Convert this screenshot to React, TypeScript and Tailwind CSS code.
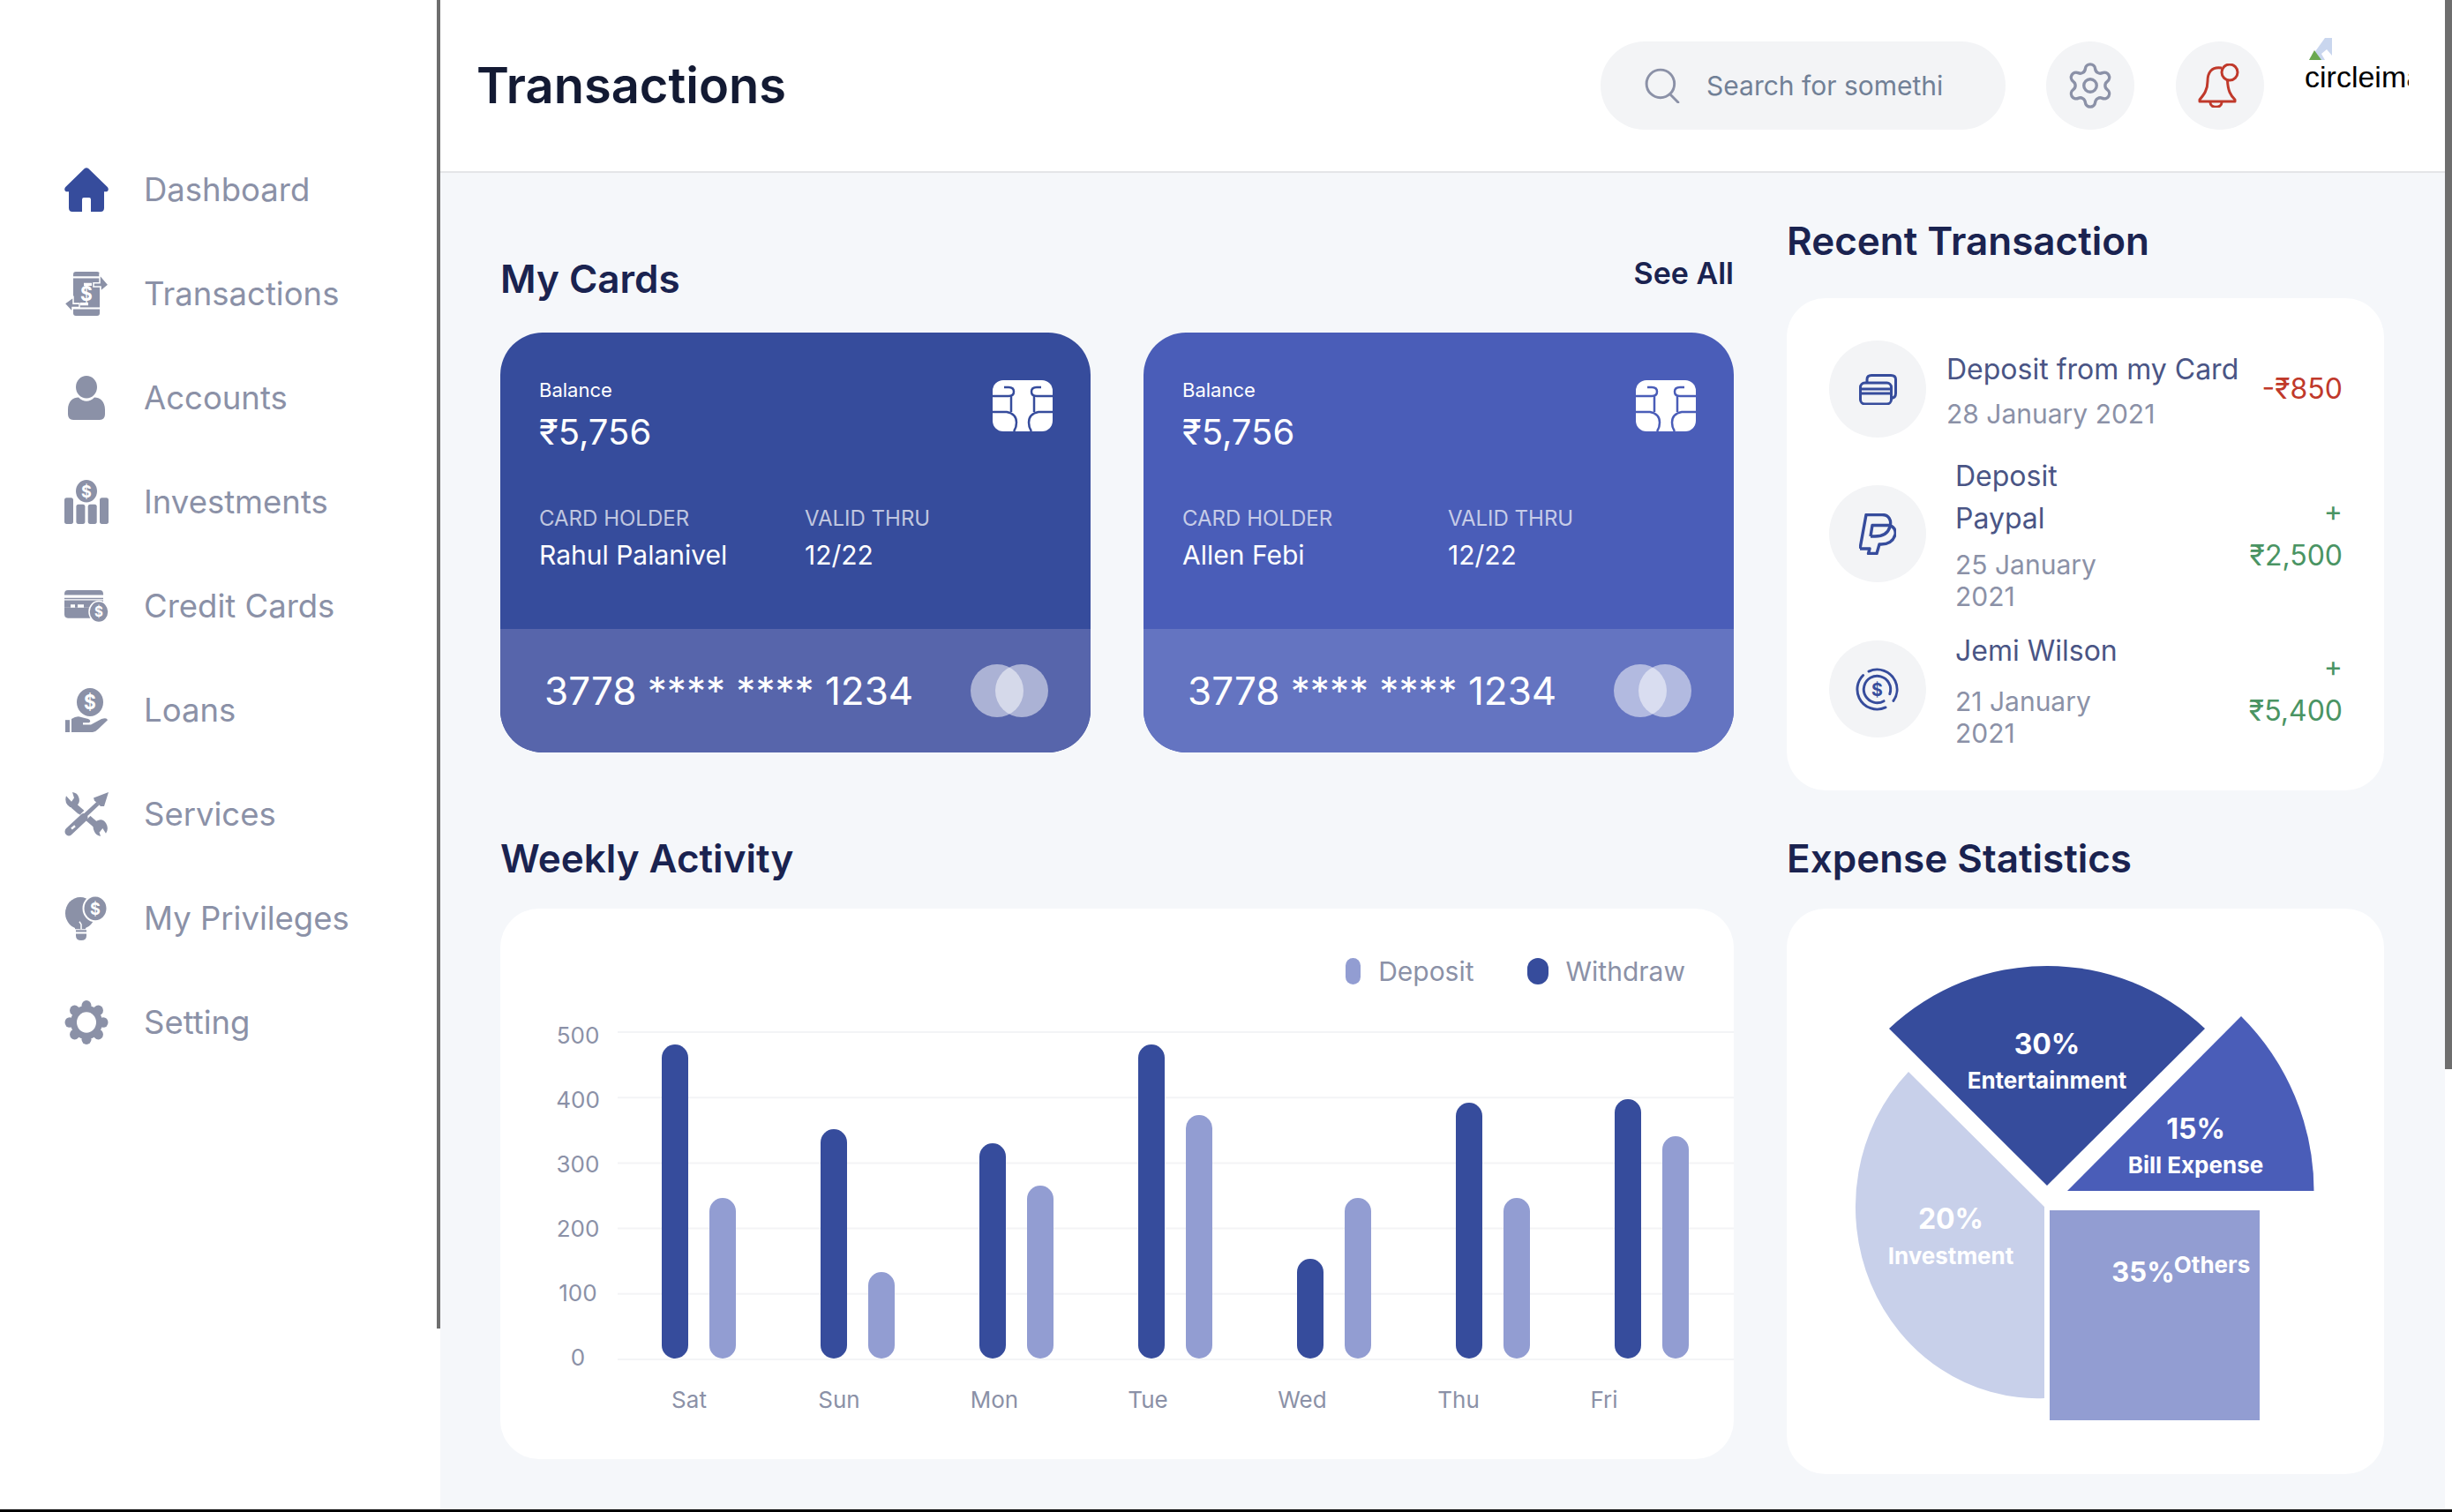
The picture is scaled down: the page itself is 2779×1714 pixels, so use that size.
import { Settings } from "lucide-react";
import type { ReactNode } from "react";

const dollar = (x: number, y: number, size: number) => (
  <text x={x} y={y} fontSize={size} fontWeight={700} fill="#fff" textAnchor="middle" dominantBaseline="central" fontFamily="Inter, sans-serif">
    $
  </text>
);

function NavSvg({ h = 50, vb = "0 0 50 47", children }: { h?: number; vb?: string; children: ReactNode }) {
  return (
    <svg viewBox={vb} preserveAspectRatio="none" width={50} style={{ height: h }} fill="currentColor">
      {children}
    </svg>
  );
}

const navIcons: Record<string, ReactNode> = {
  Dashboard: (
    <NavSvg>
      <path d="M22.8 1Q25-.5 27.2 1L49 21Q51 24 48 25.5H45V43Q45 47 41 47H30V34Q30 32 28 32H22Q20 32 20 34V47H9Q5 47 5 43V25.5H2Q-1 24 1 21Z" />
    </NavSvg>
  ),
  Transactions: (
    <NavSvg>
      <path d="M10 5V3Q10 0 13 0H37Q40 0 40 3V5Z" />
      <rect x="10" y="7" width="30" height="31" />
      <path d="M10 40H40V44Q40 47 37 47H13Q10 47 10 44Z" />
      {dollar(25, 23, 21)}
      <path d="M40 3L50 14 41 21V16H33V12H40Z" stroke="#fff" strokeWidth="1.5" />
      <path d="M10 27L0 34 9 43V38H17V34H10Z" stroke="#fff" strokeWidth="1.5" />
      <path d="M22 12H31V15H22ZM18 33H27V36H18Z" fill="#fff" />
    </NavSvg>
  ),
  Accounts: (
    <NavSvg>
      <circle cx="25" cy="12" r="12" />
      <path d="M4 36C4 27 10 23 16 23 19 26 22 27 25 27 28 27 31 26 34 23 40 23 46 27 46 36V41Q46 47 40 47H10Q4 47 4 41Z" />
    </NavSvg>
  ),
  Investments: (
    <NavSvg>
      <circle cx="25" cy="12" r="12" />
      {dollar(25, 12, 18)}
      <rect x="0" y="19" width="10" height="28" rx="2.5" />
      <rect x="13.4" y="26" width="10" height="21" rx="2.5" />
      <rect x="26.7" y="26" width="10" height="21" rx="2.5" />
      <rect x="40" y="19" width="10" height="28" rx="2.5" />
    </NavSvg>
  ),
  "Credit Cards": (
    <NavSvg h={36} vb="0 0 50 33">
      <path d="M0 5V4Q0 0 4 0H40Q44 0 44 4V5Z" />
      <path d="M0 8H44V18H0Z" />
      <path d="M0 18H44V29H4Q0 29 0 25Z" />
      <path d="M7 15H12V18H7ZM15 15H22V18H15Z" fill="#fff" />
      <path d="M0 10H44" stroke="#fff" strokeWidth="1" />
      <circle cx="39" cy="22.5" r="11" stroke="#fff" strokeWidth="1.5" />
      {dollar(39, 22.5, 15)}
    </NavSvg>
  ),
  Loans: (
    <NavSvg>
      <circle cx="29" cy="15" r="15" />
      {dollar(29, 14.5, 21)}
      <rect x="1" y="34" width="5" height="13" />
      <path d="M8 33Q14 29 19 31L27 33Q31 35 28 37H21V39H30L42 33Q48 31 49 34L38 44Q35 47 32 47H8Z" />
    </NavSvg>
  ),
  Services: (
    <NavSvg>
      <path d="M10 14L42 40" stroke="currentColor" strokeWidth="7" fill="none" />
      <path d="M2 4A8 9 0 0 0 12 16 8 8 0 0 0 16 5Q15 1 9 0L11 6 8 10Z" />
      <path d="M47 44A8 9 0 0 0 38 30 8 8 0 0 0 34 42Q36 46 41 47L39 41 43 38Z" />
      <path d="M21 27L38 11" stroke="#fff" strokeWidth="9" fill="none" />
      <path d="M22 26L38 12" stroke="currentColor" strokeWidth="4.5" fill="none" />
      <path d="M33 6L50 0 45 15 41 15 34 9Z" />
      <path d="M5 42L21 28" stroke="#fff" strokeWidth="13" fill="none" />
      <path d="M5 42L22 27" stroke="currentColor" strokeWidth="9" strokeLinecap="round" fill="none" />
      <path d="M8 39L12 36" stroke="#fff" strokeWidth="2.5" fill="none" />
    </NavSvg>
  ),
  "My Privileges": (
    <NavSvg>
      <circle cx="18" cy="18" r="17" />
      <path d="M12 33H24V35H12Z" />
      <circle cx="35" cy="13" r="14.5" fill="#fff" />
      <circle cx="35" cy="13" r="12.5" />
      {dollar(35, 13, 18)}
      <path d="M13 36H25V38H13Z" />
      <path d="M13 40H25V42Q25 47 19 47 13 47 13 42Z" />
      <path d="M17 27L19 30V35" stroke="#fff" strokeWidth="1.5" fill="none" />
    </NavSvg>
  ),
  Setting: (
    <NavSvg>
      <circle cx="25" cy="23.5" r="18" />
      {[0, 45, 90, 135, 180, 225, 270, 315].map((a) => (
        <circle key={a} cx={25 + 19 * Math.sin((a * Math.PI) / 180)} cy={23.5 - 18 * Math.cos((a * Math.PI) / 180)} r="5.5" />
      ))}
      <circle cx="25" cy="23.5" r="11" fill="#fff" />
    </NavSvg>
  ),
};

const navItems = ["Dashboard", "Transactions", "Accounts", "Investments", "Credit Cards", "Loans", "Services", "My Privileges", "Setting"];

function Sidebar() {
  return (
    <aside className="flex h-full w-[499px] shrink-0 bg-white">
      <nav className="flex-1 pl-[73px] pt-[156px]">
        {navItems.map((item, i) => (
          <div key={item} className={`flex h-[118px] items-center text-[36.5px] ${i === 0 ? "text-[#364c9c]" : "text-[#8b91a7]"}`}>
            <div className="flex w-[90px] shrink-0">{navIcons[item]}</div>
            <span className="text-[#8b91a7]">{item}</span>
          </div>
        ))}
      </nav>
      <div className="w-1 shrink-0">
        <div className="h-[1506px] w-1 bg-[#6e6e6e]" />
      </div>
    </aside>
  );
}

function BellIcon() {
  return (
    <svg viewBox="0 0 50 50" className="h-[50px] w-[50px]" fill="none" stroke="#c0392b" strokeWidth="3">
      <circle cx="36" cy="10" r="9" />
      <path d="M27 5C15 3 11 11 11 20 11 30 7 35 2 41V43H42V41C37 36 34 31 33.5 19" strokeLinejoin="round" />
      <path d="M14 44C14 51 27 51 27 44" />
    </svg>
  );
}

function Header() {
  return (
    <header className="flex h-[196px] shrink-0 items-center border-b-2 border-[#e4e5e8] bg-white pl-[41px] pr-[41px]">
      <h1 className="text-[56px] font-semibold text-[#131a33]">Transactions</h1>
      <div className="ml-auto flex h-[100px] w-[459px] items-center rounded-full bg-[#f3f4f6] pl-[50px]">
        <svg viewBox="0 0 38 38" className="h-[40px] w-[40px] shrink-0" fill="none" stroke="#8b91a7" strokeWidth="2.8" strokeLinecap="round">
          <circle cx="17" cy="17" r="15" />
          <path d="M28 29L36 37" />
        </svg>
        <span className="ml-[30px] w-[268px] overflow-hidden whitespace-nowrap text-[30px] text-[#718096]">Search for something</span>
      </div>
      <div className="ml-[46px] flex h-[100px] w-[100px] items-center justify-center rounded-full bg-[#f3f4f6]">
        <Settings size={58} strokeWidth={1.4} color="#8b91a7" />
      </div>
      <div className="ml-[47px] flex h-[100px] w-[100px] items-center justify-center rounded-full bg-[#f3f4f6]">
        <BellIcon />
      </div>
      <div className="ml-[46px] flex h-[100px] w-[118px] flex-col self-start overflow-hidden pt-[43px] font-['Liberation_Sans',sans-serif] text-[34px] leading-[38px] text-black">
        <svg viewBox="0 0 26 25" className="ml-[5px] h-[25px] w-[26px] shrink-0">
          <path d="M0 25L18 0H26V25Z" fill="#c9d6ee" />
          <path d="M0 25L6 14 14 25Z" fill="#6aa84f" />
          <path d="M14 18L18 25H26V20L20 13Z" fill="#fff" />
        </svg>
        <span className="whitespace-nowrap">circleimage</span>
      </div>
    </header>
  );
}

function Chip({ stroke }: { stroke: string }) {
  const half = (
    <g fill="none" stroke={stroke} strokeWidth="2.5">
      <path d="M0 18H18Q24 18 24 13 24 8 18 8H13" />
      <path d="M0 36H16Q27 38 27 48 27 54 24 58" />
      <path d="M21 18V36" />
    </g>
  );
  return (
    <svg viewBox="0 0 68 58" className="mt-[2px] h-[58px] w-[68px]">
      <rect width="68" height="58" rx="12" fill="#fff" />
      {half}
      <g transform="translate(68 0) scale(-1 1)">{half}</g>
    </svg>
  );
}

function BankCard({ holder, top, bottom }: { holder: string; top: string; bottom: string }) {
  return (
    <div className="flex h-[476px] w-[669px] flex-col overflow-hidden rounded-[48px] text-white" style={{ backgroundColor: top }}>
      <div className="h-[336px] pl-[44px] pr-[43px] pt-[52px]">
        <div className="flex justify-between">
          <div>
            <div className="text-[22px] leading-[26px]">Balance</div>
            <div className="mt-[12px] text-[40px] leading-[46px]">₹5,756</div>
          </div>
          <Chip stroke={top} />
        </div>
        <div className="mt-[60px] grid grid-cols-[301px_1fr]">
          <div>
            <div className="text-[24px] leading-[30px] text-white/70">CARD HOLDER</div>
            <div className="mt-[8px] text-[30px] leading-[36px]">{holder}</div>
          </div>
          <div>
            <div className="text-[24px] leading-[30px] text-white/70">VALID THRU</div>
            <div className="mt-[8px] text-[30px] leading-[36px]">12/22</div>
          </div>
        </div>
      </div>
      <div className="flex flex-1 items-center justify-between pl-[50px] pr-[48px]" style={{ backgroundColor: bottom }}>
        <span className="text-[44px]">3778 **** **** 1234</span>
        <div className="flex">
          <div className="h-[60px] w-[60px] rounded-full bg-white/50" />
          <div className="-ml-[32px] h-[60px] w-[60px] rounded-full bg-white/50" />
        </div>
      </div>
    </div>
  );
}

const txIcons = {
  cards: (
    <svg viewBox="0 0 43 35" className="h-[35px] w-[43px]" fill="none" stroke="#364c9c" strokeWidth="3">
      <rect x="1.5" y="10" width="35" height="24" rx="5" />
      <path d="M1.5 17H36.5M1.5 22H36.5" />
      <path d="M9 10V6Q9 1.5 14 1.5H36Q41.5 1.5 41.5 6V22Q41.5 27 36.5 27.5" />
    </svg>
  ),
  paypal: (
    <svg viewBox="0 0 42 47" className="h-[47px] w-[42px]" fill="none" stroke="#364c9c" strokeWidth="3.4" strokeLinejoin="round">
      <path d="M1 40L8 1.5H26C34 1.5 37 8 35 15 33 22 27 26 18 26H13" />
      <path d="M13 26L15 13.5H33C39 14 42 19 41 24 39 31 33 35 25 35H23L20 45.5H10.5L12 40H1" />
    </svg>
  ),
  coin: (
    <svg viewBox="0 0 50 50" className="-ml-[2px] h-[49px] w-[49px]" fill="none" stroke="#364c9c" strokeWidth="3" strokeLinecap="round">
      <circle cx="25" cy="25" r="23" pathLength="360" strokeDasharray="150 210" transform="rotate(-115 25 25)" />
      <circle cx="25" cy="25" r="23" pathLength="360" strokeDasharray="160 200" transform="rotate(65 25 25)" />
      <circle cx="25" cy="25" r="15.5" pathLength="360" strokeDasharray="320 40" transform="rotate(60 25 25)" />
      <text x="25" y="25.5" fontSize="20" fontWeight="700" fill="#364c9c" stroke="none" textAnchor="middle" dominantBaseline="central" fontFamily="Inter, sans-serif">
        $
      </text>
    </svg>
  ),
};

function TxRow({ icon, title, date, amount, color, className, textClass, dateClass }: { icon: ReactNode; title: ReactNode; date: ReactNode; amount: ReactNode; color: string; className: string; textClass: string; dateClass: string }) {
  return (
    <div className={`flex items-center ${className}`}>
      <div className="flex h-[110px] w-[110px] shrink-0 items-center justify-center rounded-full bg-[#f3f4f6]">{icon}</div>
      <div className={textClass}>
        <div className="text-[32px] leading-[48px] text-[#4a5585]">{title}</div>
        <div className={`text-[30px] leading-[36px] text-[#8b91a7] ${dateClass}`}>{date}</div>
      </div>
      <div className="ml-auto text-right text-[32px] leading-[50px]" style={{ color }}>
        {amount}
      </div>
    </div>
  );
}

function RecentTransactions() {
  return (
    <div className="h-[558px] rounded-[44px] bg-white pl-[48px] pr-[47px]">
      <TxRow className="h-[158px] pt-[48px]" textClass="ml-[23px]" dateClass="mt-[8px]" icon={txIcons.cards} title="Deposit from my Card" date="28 January 2021" amount="-₹850" color="#c0392b" />
      <TxRow
        className="h-[218px]"
        textClass="ml-[33px]"
        dateClass="mt-[10px]"
        icon={txIcons.paypal}
        title={<>Deposit<br />Paypal</>}
        date={<>25 January<br />2021</>}
        amount={<>+<br />₹2,500</>}
        color="#4a9463"
      />
      <TxRow
        className="h-[134px]"
        textClass="ml-[33px]"
        dateClass="mt-[15px]"
        icon={txIcons.coin}
        title="Jemi Wilson"
        date={<>21 January<br />2021</>}
        amount={<>+<br />₹5,400</>}
        color="#4a9463"
      />
    </div>
  );
}

const DARK = "#364c9c";
const LIGHT = "#929dd2";
const weekly = [
  { label: "Sat", labelX: 214, x: 183, dark: 1184, light: 1358 },
  { label: "Sun", labelX: 384, x: 363, dark: 1280, light: 1442 },
  { label: "Mon", labelX: 560, x: 543, dark: 1296, light: 1344 },
  { label: "Tue", labelX: 734, x: 723, dark: 1184, light: 1264 },
  { label: "Wed", labelX: 909, x: 903, dark: 1427, light: 1358 },
  { label: "Thu", labelX: 1086, x: 1083, dark: 1250, light: 1358 },
  { label: "Fri", labelX: 1251, x: 1263, dark: 1246, light: 1288 },
];
const BASE = 1540;

function WeeklyChart() {
  return (
    <svg viewBox="0 0 1398 494" className="h-[494px] w-[1398px]" fontFamily="Inter, sans-serif" fontSize="26" fill="#8b91a7">
      {[500, 400, 300, 200, 100, 0].map((v, i) => (
        <g key={v}>
          <line x1="133" x2="1398" y1={10 + i * 74.2} y2={10 + i * 74.2} stroke="#f3f4f6" strokeWidth="2" />
          <text x="88" y={13 + i * 73} textAnchor="middle" dominantBaseline="central">
            {v}
          </text>
        </g>
      ))}
      {weekly.map((d) => (
        <g key={d.label}>
          <rect x={d.x} y={d.dark - 1160} width="30" height={BASE - d.dark} rx="15" fill={DARK} />
          <rect x={d.x + 54} y={d.light - 1160} width="30" height={BASE - d.light} rx="15" fill={LIGHT} />
          <text x={d.labelX} y="426" textAnchor="middle" dominantBaseline="central">
            {d.label}
          </text>
        </g>
      ))}
    </svg>
  );
}

function ExpensePie() {
  const label = (x: number, y: number, size: number, weight: number, text: string) => (
    <text x={x} y={y} fontSize={size} fontWeight={weight} fill="#fff" textAnchor="middle" dominantBaseline="central">
      {text}
    </text>
  );
  return (
    <svg viewBox="0 0 677 641" className="h-[641px] w-[677px]" fontFamily="Inter, sans-serif">
      <path d="M116 136A261 261 0 0 1 474 136L295 314Z" fill={DARK} />
      <path d="M515 122A280 280 0 0 1 597.5 320H318Z" fill="#4a5db8" />
      <path d="M138 185A206 217 0 0 0 292 555V338Z" fill="#c8d0ea" />
      <rect x="298" y="342" width="238" height="238" fill={LIGHT} />
      {label(295, 153, 32, 700, "30%")}
      {label(295, 194, 26, 700, "Entertainment")}
      {label(463.5, 249, 32, 700, "15%")}
      {label(463.5, 290, 26, 700, "Bill Expense")}
      {label(186, 351, 32, 700, "20%")}
      {label(186, 393, 26, 700, "Investment")}
      {label(404, 411, 31, 700, "35%")}
      {label(482, 403, 26, 700, "Others")}
    </svg>
  );
}

function SectionTitle({ children }: { children: ReactNode }) {
  return <h2 className="flex h-[60px] items-center text-[44px] font-semibold text-[#1a2350]">{children}</h2>;
}

export default function App() {
  return (
    <div className="flex h-[1714px] w-[2779px] flex-col overflow-hidden bg-white font-['Inter',sans-serif]">
      <div className="flex min-h-0 flex-1">
        <Sidebar />
        <main className="flex min-w-0 flex-1 flex-col bg-[#f5f7fa]">
          <Header />
          <div className="flex flex-1 gap-[60px] pl-[68px]">
            <section className="w-[1398px] pt-[90px]">
              <div className="flex items-start justify-between">
                <SectionTitle>My Cards</SectionTitle>
                <span className="mt-[4px] text-[34px] font-semibold leading-[40px] text-[#1a2350]">See All</span>
              </div>
              <div className="mt-[31px] flex gap-[60px]">
                <BankCard holder="Rahul Palanivel" top="#364c9c" bottom="#5765ab" />
                <BankCard holder="Allen Febi" top="#4a5db8" bottom="#6474c1" />
              </div>
              <div className="mt-[90px]">
                <SectionTitle>Weekly Activity</SectionTitle>
              </div>
              <div className="mt-[27px] h-[624px] overflow-hidden rounded-[44px] bg-white pt-[54px]">
                <div className="flex h-[34px] items-center justify-end pr-[55px] text-[30px] text-[#8b91a7]">
                  <span className="h-[30px] w-[17px] rounded-full bg-[#929dd2]" />
                  <span className="ml-[20px]">Deposit</span>
                  <span className="ml-[60px] h-[30px] w-[24px] rounded-full bg-[#364c9c]" />
                  <span className="ml-[20px]">Withdraw</span>
                </div>
                <div className="mt-[42px]">
                  <WeeklyChart />
                </div>
              </div>
            </section>
            <section className="w-[677px] pt-[47px]">
              <SectionTitle>Recent Transaction</SectionTitle>
              <div className="mt-[35px]">
                <RecentTransactions />
              </div>
              <div className="mt-[47px]">
                <SectionTitle>Expense Statistics</SectionTitle>
              </div>
              <div className="mt-[27px] h-[641px] rounded-[44px] bg-white">
                <ExpensePie />
              </div>
            </section>
          </div>
        </main>
        <div className="w-2 shrink-0 bg-white">
          <div className="h-[1212px] w-2 bg-[#6e6e6e]" />
        </div>
      </div>
      <div className="h-[3px] shrink-0 bg-black" />
    </div>
  );
}
